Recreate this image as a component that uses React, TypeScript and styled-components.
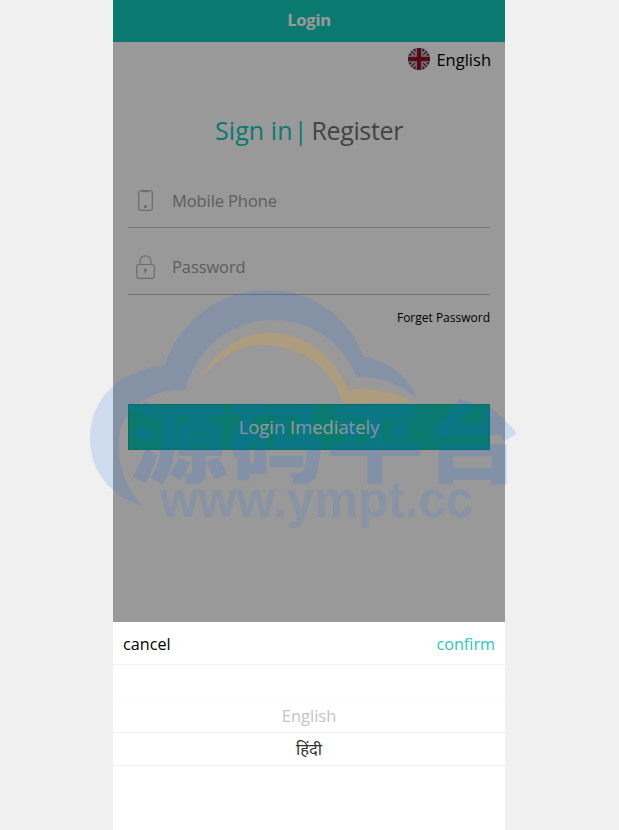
import React from "react";
import styled, { createGlobalStyle } from "styled-components";

const Global = createGlobalStyle`
  html, body { margin: 0; padding: 0; background: #f0f0f0; }
  body { font-family: "Open Sans", "Noto Sans", "Liberation Sans", sans-serif; }
  * { box-sizing: border-box; }
`;

const Page = styled.div`
  position: relative;
  width: 619px;
  height: 830px;
  overflow: hidden;
  padding-left: 113px;
`;

const Phone = styled.main`
  position: relative;
  width: 392px;
  height: 830px;
  background: #fff;
  display: flex;
  flex-direction: column;
`;

const Header = styled.header`
  height: 42px;
  padding-bottom: 4px;
  background: #12cbbb;
  color: #fff;
  font-size: 16.5px;
  font-weight: 700;
  display: flex;
  align-items: center;
  justify-content: center;
  letter-spacing: -0.2px;
`;

const LangRow = styled.div`
  height: 36px;
  padding: 0 14px 2px 0;
  display: flex;
  align-items: center;
  justify-content: flex-end;
  gap: 6px;
  font-size: 16.5px;
  color: #000;
`;

const Title = styled.h1`
  margin: 33px 0 0;
  height: 39px;
  font-size: 25px;
  font-weight: 400;
  line-height: 38px;
  display: flex;
  justify-content: center;
  color: #717171;
`;

const TitleActive = styled.span`
  color: #12cbbb;
  letter-spacing: 0.1px;
`;

const TitleBar = styled.span`
  color: #12cbbb;
  margin: 0 4px 0 1px;
`;

const TitleOther = styled.span`
  letter-spacing: -0.35px;
`;

const Form = styled.form`
  margin: 0 15px;
  padding-top: 12px;
  display: flex;
  flex-direction: column;
`;

const Field = styled.div`
  height: 66px;
  padding: 14px 0 2px;
  border-bottom: 1px solid #c8c8c8;
  display: flex;
  align-items: center;
  &:last-of-type { height: 67px; padding-top: 13px; border-bottom-color: #bdbdbd; }
`;

const FieldIcon = styled.span`
  width: 44px;
  display: flex;
  justify-content: center;
  padding-right: 10px;
  color: #b5b5b5;
`;

const Placeholder = styled.span`
  font-size: 16.5px;
  color: #9c9c9c;
  letter-spacing: -0.1px;
`;

const Forgot = styled.a`
  margin-top: 14px;
  align-self: flex-end;
  font-size: 12px;
  line-height: 18px;
  color: #000;
`;

const LoginButton = styled.button`
  margin-top: 77px;
  height: 46px;
  width: 100%;
  padding: 0 0 2px;
  background: #12cbbb;
  border: 1px solid #10b8a9;
  color: #fff;
  font: inherit;
  font-size: 18.4px;
`;

const Overlay = styled.div`
  position: absolute;
  inset: 0;
  background: rgba(0, 0, 0, 0.4);
`;

const Sheet = styled.section`
  position: absolute;
  left: 0;
  right: 0;
  bottom: 0;
  height: 208px;
  background: #fff;
`;

const Toolbar = styled.div`
  height: 43px;
  padding: 2px 10px 0;
  border-bottom: 1px solid #f4f4f4;
  display: flex;
  align-items: center;
  justify-content: space-between;
  font-size: 16.2px;
`;

const Cancel = styled.span`
  color: #000;
`;

const Confirm = styled.span`
  color: #1fc9ba;
`;

const Wheel = styled.div`
  display: flex;
  flex-direction: column;
`;

const WheelRow = styled.div<{ $active?: boolean; $line?: boolean }>`
  height: ${(p) => (p.$active ? 33 : 34)}px;
  padding-bottom: ${(p) => (p.$active ? 2 : 0)}px;
  display: flex;
  align-items: center;
  justify-content: center;
  font-size: 16.5px;
  color: ${(p) => (p.$active ? "#333" : "#c4c4c4")};
  border-bottom: 1px solid ${(p) => (p.$line ? "#f0f0f0" : "#fbfbfb")};
`;

const Watermark = styled.svg`
  position: absolute;
  left: 80px;
  top: 285px;
  width: 450px;
  height: 250px;
  pointer-events: none;
`;

const FlagIcon = () => (
  <svg width="22" height="22" viewBox="0 0 22 22">
    <defs>
      <clipPath id="flagClip">
        <circle cx="11" cy="11" r="11" />
      </clipPath>
    </defs>
    <g clipPath="url(#flagClip)">
      <rect width="22" height="22" fill="#1c2a63" />
      <path d="M0 0L22 22M22 0L0 22" stroke="#c9c9c9" strokeWidth="4.5" />
      <path d="M0 0L22 22M22 0L0 22" stroke="#8f1226" strokeWidth="1.4" />
      <path d="M11 0V22M0 11H22" stroke="#c9c9c9" strokeWidth="7" />
      <path d="M11 0V22M0 11H22" stroke="#8f1226" strokeWidth="4.4" />
    </g>
  </svg>
);

const PhoneIcon = () => (
  <svg width="15" height="21" viewBox="0 0 15 21" fill="none" stroke="currentColor" strokeWidth="1.2">
    <rect x="0.7" y="0.7" width="13.6" height="19.6" rx="2" />
    <path d="M4 1.3H11" strokeWidth="1.8" />
    <circle cx="7.5" cy="16.6" r="1" fill="currentColor" />
  </svg>
);

const LockIcon = () => (
  <svg width="19" height="24" viewBox="0 0 19 24" fill="none" stroke="currentColor" strokeWidth="1.2">
    <rect x="0.7" y="9.5" width="17.6" height="13.8" rx="2" />
    <path d="M4 9.5V6.2C4 3 6.4 0.8 9.5 0.8C12.6 0.8 15 3 15 6.2V9.5" />
    <circle cx="9.5" cy="15" r="1" fill="currentColor" />
    <path d="M9.5 15.5V18.5" />
  </svg>
);

export default function App() {
  return (
    <Page>
      <Global />
      <Phone>
        <Header>Login</Header>
        <LangRow>
          <FlagIcon />
          <span>English</span>
        </LangRow>
        <Title>
          <TitleActive>Sign in</TitleActive>
          <TitleBar>|</TitleBar>
          <TitleOther>Register</TitleOther>
        </Title>
        <Form>
          <Field>
            <FieldIcon>
              <PhoneIcon />
            </FieldIcon>
            <Placeholder>Mobile Phone</Placeholder>
          </Field>
          <Field>
            <FieldIcon>
              <LockIcon />
            </FieldIcon>
            <Placeholder>Password</Placeholder>
          </Field>
          <Forgot>Forget Password</Forgot>
          <LoginButton type="button">Login Imediately</LoginButton>
        </Form>
        <Overlay />
        <Sheet>
          <Toolbar>
            <Cancel>cancel</Cancel>
            <Confirm>confirm</Confirm>
          </Toolbar>
          <Wheel>
            <WheelRow />
            <WheelRow $line>English</WheelRow>
            <WheelRow $active $line>हिंदी</WheelRow>
          </Wheel>
        </Sheet>
      </Phone>
      <Watermark viewBox="0 0 1350 750">
        <path
          fill="rgba(20,107,240,0.15)"
          d="M190 665C60 620 30 530 30 460C30 340 120 255 255 240C300 100 430 15 560 15C700 15 810 100 850 215C930 230 990 280 1010 340C960 295 900 275 830 275C790 170 690 105 580 105C450 105 350 190 315 315C190 310 115 390 115 480C115 560 150 625 190 665Z"
        />
        <path
          fill="rgba(255,170,20,0.2)"
          d="M355 295C400 200 480 143 570 143C680 143 770 220 805 315C870 305 950 320 1000 352L790 355C760 250 660 180 550 180C470 180 400 225 355 295Z"
        />
        <text
          x="150"
          y="572"
          textLength="1175"
          lengthAdjust="spacingAndGlyphs"
          fontFamily='"Noto Sans CJK SC", sans-serif'
          fontWeight="900"
          fontSize="262"
          fill="rgba(20,107,240,0.16)"
        >
          源码平台
        </text>
        <text
          x="240"
          y="695"
          textLength="940"
          lengthAdjust="spacingAndGlyphs"
          fontFamily='"Liberation Sans", sans-serif'
          fontWeight="700"
          fontSize="154"
          fill="rgba(20,107,240,0.13)"
        >
          www.ympt.cc
        </text>
      </Watermark>
    </Page>
  );
}
